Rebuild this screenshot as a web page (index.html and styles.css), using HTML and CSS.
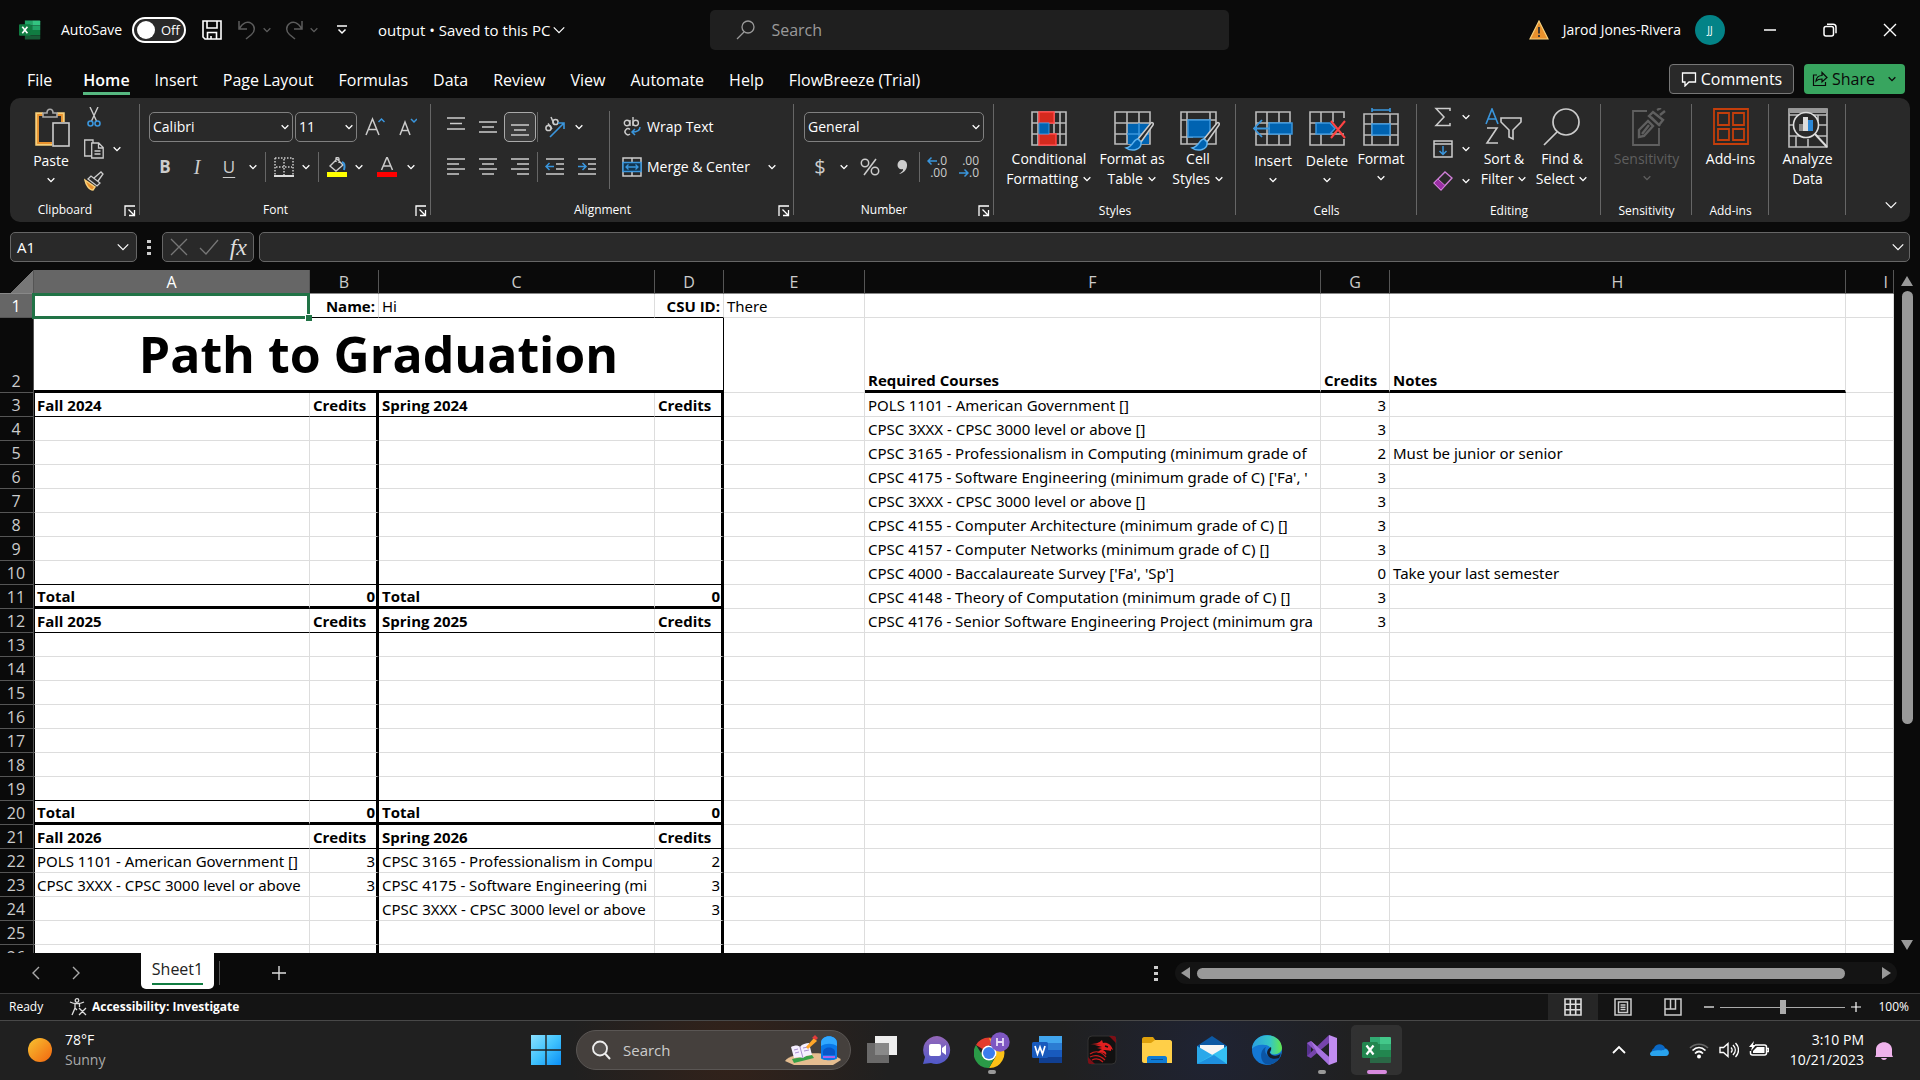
FILE: index.html
```html
<!DOCTYPE html>
<html lang="en">
<head>
<meta charset="utf-8">
<title>output - Excel</title>
<link rel="stylesheet" href="styles.css">
</head>
<body>
<svg class="sprite" aria-hidden="true">
  <symbol id="chev" viewBox="0 0 12 12"><path d="M2 4l4 4 4-4" fill="none" stroke="currentColor" stroke-width="1.6"/></symbol>
  <symbol id="chev-wide" viewBox="0 0 16 16"><path d="M2 5l6 6 6-6" fill="none" stroke="currentColor" stroke-width="1.4"/></symbol>
  <symbol id="launch" viewBox="0 0 12 12"><path d="M11 1H1v10M4.500 4.500L10 10M10.500 5v5.500H5" fill="none" stroke="currentColor" stroke-width="1.3"/></symbol>
  <symbol id="excel" viewBox="0 0 30 30"><path d="M8 2h10v7H8z" fill="#21a366"/><path d="M18 2h10a1 1 0 0 1 1 1v6H18z" fill="#33c481"/><path d="M8 9h10v6H8z" fill="#107c41"/><path d="M18 9h11v6H18z" fill="#21a366"/><path d="M8 15h21v7H8z" fill="#107c41"/><path d="M8 22h21v5a1 1 0 0 1-1 1H8z" fill="#185c37"/><rect y="7" width="16" height="16" rx="1.500" fill="#107c41"/><path d="M4.500 10.500l7 9M11.500 10.500l-7 9" stroke="#fff" stroke-width="2.200" fill="none"/></symbol>
</svg>

<header class="titlebar">
  <div class="quick">
  <svg class="i22 app"><use href="#excel"/></svg>
  <label class="autosave" for="autosave">AutoSave</label>
  <button class="toggle" id="autosave" type="button"><span class="knob"></span>Off</button>
  <button class="tb save" type="button" aria-label="Save"><svg class="i20" viewBox="0 0 20 20"><g fill="none" stroke="#fff" stroke-width="1.600"><path d="M1 1h18v18H3l-2-2z"/><path d="M5 1v7h10V1M5.500 19v-6.500h9V19M9 19v-3"/></g></svg></button>
  <button class="tb dim" type="button" aria-label="Undo"><svg class="i20" viewBox="0 0 20 20"><path d="M2 1v8h8M2.500 8.500C6 2 11 1 14.500 3.500c4 3 3.500 8 0 11L9 19" fill="none" stroke="currentColor" stroke-width="1.500"/></svg></button>
  <button class="cv dim" type="button" aria-label="Undo list"><svg class="i10"><use href="#chev"/></svg></button>
  <button class="tb dim redo" type="button" aria-label="Redo"><svg class="i20" viewBox="0 0 20 20"><path d="M18 1v8h-8M17.500 8.500C14 2 9 1 5.500 3.500c-4 3-3.500 8 0 11L11 19" fill="none" stroke="currentColor" stroke-width="1.500"/></svg></button>
  <button class="cv dim" type="button" aria-label="Redo list"><svg class="i10"><use href="#chev"/></svg></button>
  <button class="tb custom" type="button" aria-label="Customize toolbar"><svg class="i12" viewBox="0 0 12 12"><path d="M1 2h10M2.500 5.500L6 9l3.500-3.500" fill="none" stroke="#fff" stroke-width="1.500"/></svg></button>
  <button class="docname" type="button">output • Saved to this PC <svg class="i14"><use href="#chev-wide"/></svg></button>
  </div>
  <label class="search"><svg class="i20" viewBox="0 0 20 20"><g fill="none" stroke="#9a9a9a" stroke-width="1.300"><circle cx="12" cy="7" r="6"/><path d="M8 12l-7 7"/></g></svg><input type="text" placeholder="Search" aria-label="Search"></label>
  <div class="account">
    <svg class="i20" viewBox="0 0 20 20"><path d="M10 1l9 18H1z" fill="#e8912d" stroke="#f7cf7a" stroke-width="1.200"/><path d="M10 7v6.500M10 15v2" stroke="#333" stroke-width="1.800"/></svg>
    <span>Jarod Jones-Rivera</span><span class="avatar">JJ</span>
  </div>
  <div class="winbtns">
    <button type="button" aria-label="Minimize"><svg class="i14" viewBox="0 0 14 14"><path d="M1 7h12" stroke="#fff" stroke-width="1.500"/></svg></button>
    <button type="button" aria-label="Restore"><svg class="i14" viewBox="0 0 14 14"><g fill="none" stroke="#fff" stroke-width="1.500"><rect x="1" y="3.500" width="9.500" height="9.500" rx="2"/><path d="M4 1.200h6a3 3 0 0 1 3 3v6"/></g></svg></button>
    <button type="button" aria-label="Close"><svg class="i14" viewBox="0 0 14 14"><path d="M1 1l12 12M13 1L1 13" stroke="#fff" stroke-width="1.400"/></svg></button>
  </div>
</header>

<nav class="tabs">
  <a href="#file" class="file">File</a><a href="#home" class="on">Home</a><a href="#insert">Insert</a><a href="#layout">Page Layout</a><a href="#formulas">Formulas</a><a href="#data">Data</a><a href="#review">Review</a><a href="#view">View</a><a href="#automate">Automate</a><a href="#help">Help</a><a href="#flow">FlowBreeze (Trial)</a>
  <button class="comments" type="button"><svg class="i16" viewBox="0 0 16 16"><path d="M1.500 2h13v9H8l-4 4v-4H1.500z" fill="none" stroke="#fff" stroke-width="1.300"/></svg>Comments</button>
  <button class="share" type="button"><svg class="i16" viewBox="0 0 16 16"><path d="M5 4H1.500v10.500h12V11M4 10c.5-4 3-5.500 6-5.500V1.500l5 5-5 4.500V8C7.500 8 5.500 8.500 4 10z" fill="none" stroke="#0a0a0a" stroke-width="1.200"/></svg>Share<svg class="i10"><use href="#chev"/></svg></button>
</nav>

<section class="ribbon">
  <div class="group g-clip">
    <div class="body">
      <button class="big paste" type="button"><svg class="i40" viewBox="-2 0 40 40"><path d="M10 6H4v30h15M24 6h6v8" fill="none" stroke="#f7cf7a" stroke-width="3.500"/><path d="M10 7H5v28h14M24 7h5v7" fill="none" stroke="#e8912d" stroke-width="1.800"/><path d="M10 9V5h4c0-5 6-5 6 0h4v4z" fill="#292929" stroke="#aaa" stroke-width="1.600"/><rect x="20" y="15" width="16" height="23" fill="#292929" stroke="#ccc" stroke-width="1.600"/></svg><span>Paste</span><svg class="i10"><use href="#chev"/></svg></button>
      <div class="stack">
        <div><button class="ib" type="button" aria-label="Cut"><svg class="i20" viewBox="0 0 20 20"><path d="M6 0l6.500 14M14 0L7.500 14" stroke="#ccc" stroke-width="1.400"/><g fill="none" stroke="#3a96dd" stroke-width="1.600"><circle cx="6.500" cy="16.500" r="2.500"/><circle cx="13.500" cy="16.500" r="2.500"/></g></svg></button></div>
        <div><button class="ib" type="button" aria-label="Copy"><svg class="i20" viewBox="0 0 20 20"><g fill="#292929" stroke="#ccc" stroke-width="1.300"><path d="M8 17H0.700V1H9v3"/><path d="M7.700 4h7l4.500 4.500V19H7.700zM14.500 4v5h4.700M10.500 12h6M10.500 15h6"/></g></svg></button><button class="cv" type="button" aria-label="Copy options"><svg class="i10"><use href="#chev"/></svg></button></div>
        <div><button class="ib" type="button" aria-label="Format Painter"><svg class="i20" viewBox="0 0 20 20"><path d="M1 9l10 7-2 3c-4 0-7-5-8-10z" fill="#e8912d" stroke="#f7cf7a" stroke-width="1.500"/><path d="M4 8l3-3 9 7-3 3zM10 7l7-6 2 2-5 7" fill="#292929" stroke="#ccc" stroke-width="1.300"/></svg></button></div>
      </div>
    </div>
    <div class="cap">Clipboard<button type="button" class="launch" aria-label="Clipboard options"><svg class="i12"><use href="#launch"/></svg></button></div>
  </div>

  <div class="group g-font">
    <div class="body rows">
      <div class="row"><select class="drop w144" aria-label="Font"><option>Calibri</option></select><select class="drop w62" aria-label="Font size"><option>11</option></select><button class="ib" type="button" aria-label="Grow font"><svg class="i20" viewBox="0 0 20 20"><path d="M1 18L7.500 2 14 18M3.500 12.500h8" fill="none" stroke="#ccc" stroke-width="1.500"/><path d="M13.500 5l3-3 3 3" fill="none" stroke="#3a96dd" stroke-width="1.500"/></svg></button><button class="ib" type="button" aria-label="Shrink font"><svg class="i20" viewBox="0 0 20 20"><path d="M3 18L8 5l5 13M5 13.500h6.500" fill="none" stroke="#ccc" stroke-width="1.500"/><path d="M14 2l3 3 3-3" fill="none" stroke="#3a96dd" stroke-width="1.500"/></svg></button></div>
      <div class="row"><button class="ib glyph bold" type="button">B</button><button class="ib glyph ital" type="button">I</button><button class="ib glyph under" type="button">U</button><button class="cv" type="button" aria-label="Underline options"><svg class="i10"><use href="#chev"/></svg></button><i class="sep"></i><button class="ib n" type="button" aria-label="Borders"><svg class="i20" viewBox="0 0 20 20"><path d="M1 1h18v17M1 1v17M10 2v16M2 10h16" fill="none" stroke="#ccc" stroke-width="1.500" stroke-dasharray="1.500 1.500"/><path d="M0 19h20" stroke="#ddd" stroke-width="2"/></svg></button><button class="cv" type="button" aria-label="Border options"><svg class="i10"><use href="#chev"/></svg></button><i class="sep"></i><button class="ib n" type="button" aria-label="Fill color"><svg class="i20" viewBox="0 0 20 20"><path d="M3 9l7-7 6 6-7 6zM9 5V1.500c0-2 3-1 3 .5v4" fill="none" stroke="#ccc" stroke-width="1.400"/><path d="M15 5c3 1 3 4 2 8" fill="none" stroke="#3a96dd" stroke-width="2"/><path d="M0 15h20v5H0z" fill="#ff0"/></svg></button><button class="cv" type="button" aria-label="Fill options"><svg class="i10"><use href="#chev"/></svg></button><button class="ib fc" type="button" aria-label="Font color"><svg class="i20" viewBox="0 0 20 20"><path d="M4.500 13L10 0l5.500 13M6.500 9h7" fill="none" stroke="#ccc" stroke-width="1.500"/><path d="M0 15h20v5H0z" fill="#f00"/></svg></button><button class="cv" type="button" aria-label="Font color options"><svg class="i10"><use href="#chev"/></svg></button></div>
    </div>
    <div class="cap">Font<button type="button" class="launch" aria-label="Font options"><svg class="i12"><use href="#launch"/></svg></button></div>
  </div>

  <div class="group g-align">
    <div class="body">
      <div class="rows">
        <div class="row"><button class="ib" type="button" aria-label="Top align"><svg class="i20" viewBox="0 0 20 20"><path d="M1 1h18M4 6.500h12M1 12h18" stroke="#ccc" stroke-width="1.500"/></svg></button><button class="ib" type="button" aria-label="Middle align"><svg class="i20" viewBox="0 0 20 20"><path d="M1 5h18M4 10h12M1 15h18" stroke="#ccc" stroke-width="1.500"/></svg></button><button class="ib pressed" type="button" aria-label="Bottom align"><svg class="i20" viewBox="0 0 20 20"><path d="M1 8h18M4 13h12M1 18h18" stroke="#ccc" stroke-width="1.500"/></svg></button><i class="sep tight"></i><button class="ib" type="button" aria-label="Orientation"><svg class="i22" viewBox="0 0 22 22"><g fill="none" stroke="#ccc" stroke-width="1.500"><circle cx="4.500" cy="12" r="2.600"/><path d="M4 7.500l4 5.500"/><circle cx="11.500" cy="6" r="2.600"/><path d="M7 1l3 7"/></g><path d="M6 21L20 7M14 7h6v6" fill="none" stroke="#3a96dd" stroke-width="1.600"/></svg></button><button class="cv" type="button" aria-label="Orientation options"><svg class="i10"><use href="#chev"/></svg></button></div>
        <div class="row"><button class="ib" type="button" aria-label="Align left"><svg class="i20" viewBox="0 0 20 20"><path d="M1 2h18M1 7h12M1 12h18M1 17h12" stroke="#ccc" stroke-width="1.500"/></svg></button><button class="ib" type="button" aria-label="Center"><svg class="i20" viewBox="0 0 20 20"><path d="M1 2h18M4 7h12M1 12h18M4 17h12" stroke="#ccc" stroke-width="1.500"/></svg></button><button class="ib" type="button" aria-label="Align right"><svg class="i20" viewBox="0 0 20 20"><path d="M1 2h18M7 7h12M1 12h18M7 17h12" stroke="#ccc" stroke-width="1.500"/></svg></button><i class="sep tight"></i><button class="ib" type="button" aria-label="Decrease indent"><svg class="i20" viewBox="0 0 20 20"><path d="M1 2h18M11 7h8M11 12h8M1 17h18" stroke="#ccc" stroke-width="1.500"/><path d="M9 9.500H1M4.500 6L1 9.500 4.500 13" fill="none" stroke="#3a96dd" stroke-width="1.500"/></svg></button><button class="ib" type="button" aria-label="Increase indent"><svg class="i20" viewBox="0 0 20 20"><path d="M1 2h18M11 7h8M11 12h8M1 17h18" stroke="#ccc" stroke-width="1.500"/><path d="M1 9.500h8M5.500 6L9 9.500 5.500 13" fill="none" stroke="#3a96dd" stroke-width="1.500"/></svg></button></div>
      </div>
      <i class="tall"></i>
      <div class="rows">
        <div class="row"><button class="txt" type="button"><svg class="i20" viewBox="0 0 20 20"><g fill="none" stroke="#ccc" stroke-width="1.400"><circle cx="5" cy="6" r="2.700"/><path d="M8 3v6M11 0v9"/><circle cx="13.700" cy="6" r="2.700"/><path d="M8 12.500a3 3 0 1 0 0 4.500"/></g><path d="M18 10c0 4-3 5-8 5M13 12l-3 3 3 3" fill="none" stroke="#3a96dd" stroke-width="1.500"/></svg>Wrap Text</button></div>
        <div class="row"><button class="txt" type="button"><svg class="i20" viewBox="0 0 20 20"><path d="M1 1h18v18H1zM10 1v4M10 15v4" fill="none" stroke="#ccc" stroke-width="1.500"/><path d="M1 5.500h18v9H1z" fill="#12354f" stroke="#3a96dd" stroke-width="1.500"/><path d="M4 10h12M6.500 7.500L4 10l2.500 2.500M13.500 7.500L16 10l-2.500 2.500" fill="none" stroke="#3a96dd" stroke-width="1.300"/></svg>Merge &amp; Center</button><button class="cv far" type="button" aria-label="Merge options"><svg class="i10"><use href="#chev"/></svg></button></div>
      </div>
    </div>
    <div class="cap">Alignment<button type="button" class="launch" aria-label="Alignment options"><svg class="i12"><use href="#launch"/></svg></button></div>
  </div>

  <div class="group g-num">
    <div class="body rows">
      <div class="row"><select class="drop w180" aria-label="Number format"><option>General</option></select></div>
      <div class="row"><button class="ib glyph num" type="button">$</button><button class="cv" type="button" aria-label="Currency options"><svg class="i10"><use href="#chev"/></svg></button><button class="ib pct" type="button" aria-label="Percent"><svg class="i20" viewBox="0 0 20 20"><g fill="none" stroke="#ccc" stroke-width="1.500"><circle cx="5" cy="6" r="3.700"/><circle cx="15" cy="14" r="3.700"/><path d="M16 2L4 18"/></g></svg></button><button class="ib" type="button" aria-label="Comma"><svg class="i20" viewBox="0 0 20 20"><path d="M10 3c6 0 6 7 3.500 10-1.500 2-3.500 3.500-6.500 4 3-2 4.500-3.500 4-5-3 1-5.500-1-5.500-4 0-3 2-5 4.500-5z" fill="#ccc"/></svg></button><i class="sep tight"></i><button class="ib dec" type="button"><span><svg class="i10" viewBox="0 0 10 10"><path d="M10 5H1M4.500 1.500L1 5l3.500 3.500" fill="none" stroke="#3a96dd" stroke-width="1.500"/></svg>.0</span><span>.00</span></button><button class="ib dec" type="button"><span>.00</span><span><svg class="i10" viewBox="0 0 10 10"><path d="M0 5h9M5.500 1.500L9 5 5.500 8.500" fill="none" stroke="#3a96dd" stroke-width="1.500"/></svg>.0</span></button></div>
    </div>
    <div class="cap">Number<button type="button" class="launch" aria-label="Number options"><svg class="i12"><use href="#launch"/></svg></button></div>
  </div>

  <div class="group g-styles">
    <div class="body">
      <button class="big b90" type="button"><svg class="i36" viewBox="0 0 36 36"><path d="M1 1h34v33H1zM7 1v33M29 1v33M1 12h34M1 23h34M23 1v33" fill="none" stroke="#bbb" stroke-width="1.600"/><path d="M8 1h15v11H8zM8 23h17v11H8z" fill="#d42a1e" stroke="#ff4343" stroke-width="1.500"/><path d="M8 12h10v11H8z" fill="#0063b1" stroke="#3a96dd"/></svg><span>Conditional<br>Formatting <svg class="i10"><use href="#chev"/></svg></span></button>
      <button class="big b76" type="button"><svg class="i40 brush" viewBox="0 0 40 40"><path d="M1 1h35v32H1z" fill="none" stroke="#bbb" stroke-width="1.600"/><path d="M13 12h22v21H13z" fill="#0063b1"/><path d="M1 12h35M1 23h12M13 1v32M25 1v11" fill="none" stroke="#bbb" stroke-width="1.600"/><path d="M13 23h22M25 12v21" stroke="#3a96dd" stroke-width="1.500"/><path d="M37 12L24 28l3 3 12-17c1-2-1-3-2-2z" fill="#292929" stroke="#ccc" stroke-width="1.500"/><path d="M24 28c-5 0-4 7-12 9 6 4 16 2 15-6z" fill="#0063b1" stroke="#5db3f0" stroke-width="1.500"/></svg><span>Format as<br>Table <svg class="i10"><use href="#chev"/></svg></span></button>
      <button class="big b56" type="button"><svg class="i40 brush" viewBox="0 0 40 40"><path d="M1 1h35v32H1zM7 1v32M30 1v8M1 9h35M1 26h12" fill="none" stroke="#bbb" stroke-width="1.600"/><path d="M8 9h22v17H8z" fill="#0063b1" stroke="#3a96dd" stroke-width="1.500"/><path d="M37 12L24 28l3 3 12-17c1-2-1-3-2-2z" fill="#292929" stroke="#ccc" stroke-width="1.500"/><path d="M24 28c-5 0-4 7-12 9 6 4 16 2 15-6z" fill="#0063b1" stroke="#5db3f0" stroke-width="1.500"/></svg><span>Cell<br>Styles <svg class="i10"><use href="#chev"/></svg></span></button>
    </div>
    <div class="cap">Styles</div>
  </div>

  <div class="group g-cells">
    <div class="body">
      <button class="big b54" type="button"><svg class="i40" viewBox="0 0 40 40"><path d="M3 4h34v33H3zM14 4v33M26 4v33M3 15h34M3 26h34" fill="none" stroke="#bbb" stroke-width="1.600"/><path d="M16 15h23v11H16z" fill="#0063b1" stroke="#3a96dd" stroke-width="1.500"/><path d="M17 20.500H1M9 12l-8 8.500L9 29" fill="none" stroke="#3a96dd" stroke-width="1.800"/></svg><span>Insert</span><svg class="i10"><use href="#chev"/></svg></button>
      <button class="big b54" type="button"><svg class="i40" viewBox="0 0 40 40"><path d="M37 10V4H3v33h34v-6M14 4v33M26 4v10M3 15h12M3 26h34" fill="none" stroke="#bbb" stroke-width="1.600"/><path d="M9 15h14l5 5.500-5 5.500H9z" fill="#0063b1" stroke="#3a96dd" stroke-width="1.500"/><path d="M24 13l14 17M38 13L24 30" stroke="#ff4343" stroke-width="2"/></svg><span>Delete</span><svg class="i10"><use href="#chev"/></svg></button>
      <button class="big up b54" type="button"><svg class="i40" viewBox="0 0 40 40"><path d="M3 6h34v31H3zM11 6v31M29 6v31M3 16h34M3 27h34" fill="none" stroke="#bbb" stroke-width="1.600"/><path d="M11 16h18v11H11z" fill="#0063b1" stroke="#3a96dd" stroke-width="1.500"/><path d="M11 2h18M11 0v4M29 0v4" stroke="#3a96dd" stroke-width="1.600"/></svg><span>Format</span><svg class="i10"><use href="#chev"/></svg></button>
    </div>
    <div class="cap">Cells</div>
  </div>

  <div class="group g-edit">
    <div class="body">
      <div class="stack">
        <div><button class="ib" type="button" aria-label="AutoSum"><svg class="i20" viewBox="0 0 20 20"><path d="M17 4V1.500H3L11 10l-8 8.500h14V16" fill="none" stroke="#ccc" stroke-width="1.500"/></svg></button><button class="cv" type="button" aria-label="AutoSum options"><svg class="i10"><use href="#chev"/></svg></button></div>
        <div><button class="ib" type="button" aria-label="Fill"><svg class="i20" viewBox="0 0 20 20"><path d="M1 2h18v16H1zM1 5h18" fill="none" stroke="#ccc" stroke-width="1.500"/><path d="M10 7v8.500M6.500 12l3.500 3.500 3.500-3.500" fill="none" stroke="#3a96dd" stroke-width="1.500"/></svg></button><button class="cv" type="button" aria-label="Fill options"><svg class="i10"><use href="#chev"/></svg></button></div>
        <div><button class="ib" type="button" aria-label="Clear"><svg class="i20" viewBox="0 0 20 20"><path d="M1 12L12 1l7 6L8 19z" fill="none" stroke="#d07fd8" stroke-width="1.400"/><path d="M1 12l4-4 7 6.500L8 19z" fill="#9b2fa5" stroke="#d07fd8"/></svg></button><button class="cv" type="button" aria-label="Clear options"><svg class="i10"><use href="#chev"/></svg></button></div>
      </div>
      <button class="big up b58" type="button"><svg class="i40" viewBox="0 0 40 40"><path d="M2 16L8 1l6 15M4 11h8" fill="none" stroke="#3a96dd" stroke-width="1.600"/><path d="M3 20h10L3 35h11M17 10h20v4l-8 8v9l-4-2v-7l-8-8z" fill="none" stroke="#ccc" stroke-width="1.600"/></svg><span>Sort &amp;<br>Filter <svg class="i10"><use href="#chev"/></svg></span></button>
      <button class="big up b58" type="button"><svg class="i40" viewBox="0 0 40 40"><g fill="none" stroke="#ccc" stroke-width="1.700"><circle cx="24" cy="14" r="13"/><path d="M15 24L2 37"/></g></svg><span>Find &amp;<br>Select <svg class="i10"><use href="#chev"/></svg></span></button>
    </div>
    <div class="cap">Editing</div>
  </div>

  <div class="group g-sens">
    <div class="body"><button class="big up fill off" type="button" disabled><svg class="i40" viewBox="0 0 40 40"><path d="M20 3H6v34h26V20" fill="none" stroke="currentColor" stroke-width="1.800"/><path d="M12 22l9-9 5 5-9 10-5 1zM15 26l7-9M24 9l9 9M22 8l4-4 10 8-4 5zM30 2l4-2M33 7l5-4" fill="none" stroke="currentColor" stroke-width="2.400"/></svg><span>Sensitivity</span><svg class="i10"><use href="#chev"/></svg></button></div>
    <div class="cap">Sensitivity</div>
  </div>
  <div class="group g-add">
    <div class="body"><button class="big up fill" type="button"><svg class="i40" viewBox="0 0 40 40"><path d="M3 1h34v35H3zM7 5h11v12H7zM22 5h11v12H22zM7 21h11v11H7zM22 21h11v11H22z" fill="none" stroke="#c43e0b" stroke-width="1.800"/></svg><span>Add-ins</span></button></div>
    <div class="cap">Add-ins</div>
  </div>
  <div class="group g-add">
    <div class="body"><button class="big up fill" type="button"><svg class="i40" viewBox="0 0 40 40"><path d="M1 1h38v38H1zM1 7h38M1 17h10M30 17h9M1 28h12M29 28h10M8 28v11M20 31v8M30 7v6" fill="none" stroke="#bbb" stroke-width="1.600"/><path d="M1 1h38v4H1z" fill="#999"/><circle cx="18" cy="17" r="12.500" fill="#292929" stroke="#ddd" stroke-width="1.600"/><path d="M11 16h4v7h-4z" fill="#888"/><path d="M15 9h5v14h-5z" fill="#ddd"/><path d="M20 12h5v11h-5z" fill="#2b88d8"/><path d="M27 26l12 13" stroke="#ddd" stroke-width="2"/></svg><span>Analyze<br>Data</span></button></div>
  </div>
  <button class="collapse" type="button" aria-label="Collapse ribbon"><svg class="i14"><use href="#chev-wide"/></svg></button>
</section>

<section class="formula">
  <button class="namebox" type="button">A1<svg class="i14"><use href="#chev-wide"/></svg></button>
  <svg class="dots" viewBox="0 0 4 16"><path d="M0 1h4v3H0zM0 7h4v3H0zM0 13h4v3H0z" fill="#ccc"/></svg>
  <div class="fx"><svg class="i18" viewBox="0 0 18 18"><path d="M1 1l16 16M17 1L1 17" stroke="#777" stroke-width="1.300"/></svg><svg class="i20" viewBox="0 0 20 20"><path d="M1 11l6 6L19 3" fill="none" stroke="#777" stroke-width="1.300"/></svg><span>fx</span></div>
  <label class="fline"><input type="text" aria-label="Formula"><svg class="i14"><use href="#chev-wide"/></svg></label>
</section>

<main class="sheet">
  <div class="viewport">
  <table class="grid">
    <colgroup><col class="c-n"><col class="c-w"><col class="c-s"><col class="c-w"><col class="c-s"><col class="c-e"><col class="c-x"><col class="c-s"><col class="c-x"><col></colgroup>
    <thead><tr><th class="corner"></th><th class="sel">A</th><th>B</th><th>C</th><th>D</th><th>E</th><th>F</th><th>G</th><th>H</th><th class="last-h">I</th></tr></thead>
    <tbody>
    <tr class="r1"><th class="sel">1</th><td class="active"></td><td class="b r">Name:</td><td>Hi</td><td class="b r">CSU ID:</td><td>There</td><td></td><td></td><td></td><td></td></tr>
    <tr class="r2"><th>2</th><td colspan="4" class="title">Path to Graduation</td><td></td><td class="b u">Required Courses</td><td class="b u">Credits</td><td class="b u">Notes</td><td></td></tr>
    <tr class="plan head"><th>3</th><td>Fall 2024</td><td>Credits</td><td>Spring 2024</td><td>Credits</td><td></td><td>POLS 1101 - American Government []</td><td class="r">3</td><td></td><td></td></tr>
    <tr class="plan"><th>4</th><td></td><td></td><td></td><td></td><td></td><td>CPSC 3XXX - CPSC 3000 level or above []</td><td class="r">3</td><td></td><td></td></tr>
    <tr class="plan"><th>5</th><td></td><td></td><td></td><td></td><td></td><td>CPSC 3165 - Professionalism in Computing (minimum grade of</td><td class="r">2</td><td>Must be junior or senior</td><td></td></tr>
    <tr class="plan"><th>6</th><td></td><td></td><td></td><td></td><td></td><td>CPSC 4175 - Software Engineering (minimum grade of C) ['Fa', '</td><td class="r">3</td><td></td><td></td></tr>
    <tr class="plan"><th>7</th><td></td><td></td><td></td><td></td><td></td><td>CPSC 3XXX - CPSC 3000 level or above []</td><td class="r">3</td><td></td><td></td></tr>
    <tr class="plan"><th>8</th><td></td><td></td><td></td><td></td><td></td><td>CPSC 4155 - Computer Architecture (minimum grade of C) []</td><td class="r">3</td><td></td><td></td></tr>
    <tr class="plan"><th>9</th><td></td><td></td><td></td><td></td><td></td><td>CPSC 4157 - Computer Networks (minimum grade of C) []</td><td class="r">3</td><td></td><td></td></tr>
    <tr class="plan end"><th>10</th><td></td><td></td><td></td><td></td><td></td><td>CPSC 4000 - Baccalaureate Survey ['Fa', 'Sp']</td><td class="r">0</td><td>Take your last semester</td><td></td></tr>
    <tr class="plan total"><th>11</th><td>Total</td><td class="r">0</td><td>Total</td><td class="r">0</td><td></td><td>CPSC 4148 - Theory of Computation (minimum grade of C) []</td><td class="r">3</td><td></td><td></td></tr>
    <tr class="plan head"><th>12</th><td>Fall 2025</td><td>Credits</td><td>Spring 2025</td><td>Credits</td><td></td><td>CPSC 4176 - Senior Software Engineering Project (minimum gra</td><td class="r">3</td><td></td><td></td></tr>
    <tr class="plan"><th>13</th><td></td><td></td><td></td><td></td><td></td><td></td><td></td><td></td><td></td></tr>
    <tr class="plan"><th>14</th><td></td><td></td><td></td><td></td><td></td><td></td><td></td><td></td><td></td></tr>
    <tr class="plan"><th>15</th><td></td><td></td><td></td><td></td><td></td><td></td><td></td><td></td><td></td></tr>
    <tr class="plan"><th>16</th><td></td><td></td><td></td><td></td><td></td><td></td><td></td><td></td><td></td></tr>
    <tr class="plan"><th>17</th><td></td><td></td><td></td><td></td><td></td><td></td><td></td><td></td><td></td></tr>
    <tr class="plan"><th>18</th><td></td><td></td><td></td><td></td><td></td><td></td><td></td><td></td><td></td></tr>
    <tr class="plan end"><th>19</th><td></td><td></td><td></td><td></td><td></td><td></td><td></td><td></td><td></td></tr>
    <tr class="plan total"><th>20</th><td>Total</td><td class="r">0</td><td>Total</td><td class="r">0</td><td></td><td></td><td></td><td></td><td></td></tr>
    <tr class="plan head"><th>21</th><td>Fall 2026</td><td>Credits</td><td>Spring 2026</td><td>Credits</td><td></td><td></td><td></td><td></td><td></td></tr>
    <tr class="plan"><th>22</th><td>POLS 1101 - American Government []</td><td class="r">3</td><td>CPSC 3165 - Professionalism in Compu</td><td class="r">2</td><td></td><td></td><td></td><td></td><td></td></tr>
    <tr class="plan"><th>23</th><td>CPSC 3XXX - CPSC 3000 level or above</td><td class="r">3</td><td>CPSC 4175 - Software Engineering (mi</td><td class="r">3</td><td></td><td></td><td></td><td></td><td></td></tr>
    <tr class="plan"><th>24</th><td></td><td></td><td>CPSC 3XXX - CPSC 3000 level or above</td><td class="r">3</td><td></td><td></td><td></td><td></td><td></td></tr>
    <tr class="plan"><th>25</th><td></td><td></td><td></td><td></td><td></td><td></td><td></td><td></td><td></td></tr>
    <tr class="plan"><th>26</th><td></td><td></td><td></td><td></td><td></td><td></td><td></td><td></td><td></td></tr>
    </tbody>
  </table>
  </div>
  <div class="vscroll"><svg class="i12" viewBox="0 0 12 12"><path d="M6 1l6 10H0z" fill="#999"/></svg><span class="vthumb"></span><svg class="i12" viewBox="0 0 12 12"><path d="M6 11l6-10H0z" fill="#999"/></svg></div>
</main>

<section class="sheetbar">
  <button class="nav" type="button" aria-label="Previous sheet"><svg class="i14" viewBox="0 0 14 14"><path d="M10 1L4 7l6 6" fill="none" stroke="#aaa" stroke-width="1.400"/></svg></button>
  <button class="nav" type="button" aria-label="Next sheet"><svg class="i14" viewBox="0 0 14 14"><path d="M4 1l6 6-6 6" fill="none" stroke="#aaa" stroke-width="1.400"/></svg></button>
  <button class="sheettab" type="button"><span>Sheet1</span></button>
  <button class="add" type="button" aria-label="New sheet"><svg class="i14" viewBox="0 0 14 14"><path d="M7 0v14M0 7h14" stroke="#ddd" stroke-width="1.400"/></svg></button>
  <svg class="dots" viewBox="0 0 4 16"><path d="M0 1h4v3H0zM0 7h4v3H0zM0 13h4v3H0z" fill="#ccc"/></svg>
  <div class="hscroll"><svg class="i12" viewBox="0 0 12 12"><path d="M1 6l9-6v12z" fill="#999"/></svg><span class="hthumb"></span><svg class="i12" viewBox="0 0 12 12"><path d="M11 6L2 0v12z" fill="#999"/></svg></div>
</section>

<section class="status">
  <span class="ready">Ready</span>
  <svg class="i18" viewBox="0 0 18 18"><g fill="none" stroke="#ddd" stroke-width="1.300"><circle cx="8" cy="2.500" r="1.800"/><path d="M1 4c4 2 10 2 14 0M6 6v4l-3 7M10.500 6v3M6 10l2 2M10 10l7 7M17 10l-7 7"/></g></svg>
  <span class="acc">Accessibility: Investigate</span>
  <div class="views">
    <button class="on" type="button" aria-label="Normal"><svg class="i18" viewBox="0 0 18 18"><path d="M1 1h16v16H1zM6.300 1v16M11.700 1v16M1 6.300h16M1 11.700h16" fill="none" stroke="#ddd" stroke-width="1.600"/></svg></button>
    <button type="button" aria-label="Page layout"><svg class="i18" viewBox="0 0 18 18"><path d="M1 1h16v16H1zM4.500 4h9v10.500h-9zM6.500 7h5M6.500 9.300h5M6.500 11.600h5" fill="none" stroke="#ccc" stroke-width="1.500"/></svg></button>
    <button type="button" aria-label="Page break"><svg class="i18" viewBox="0 0 18 18"><path d="M1 1h16v16H1zM6.500 1v10M11.500 1v10H1" fill="none" stroke="#ccc" stroke-width="1.500"/></svg></button>
  </div>
  <button class="z" type="button" aria-label="Zoom out"><svg class="i10" viewBox="0 0 10 10"><path d="M0 5h10" stroke="#fff" stroke-width="1.200"/></svg></button>
  <input class="zoom" type="range" min="0" max="200" value="100" aria-label="Zoom">
  <button class="z" type="button" aria-label="Zoom in"><svg class="i10" viewBox="0 0 10 10"><path d="M0 5h10M5 0v10" stroke="#fff" stroke-width="1.200"/></svg></button>
  <span class="pct100">100%</span>
</section>

<footer class="taskbar">
  <div class="weather"><span class="sun"></span><div><div>78°F</div><div class="mute">Sunny</div></div></div>
  <div class="apps">
    <button type="button" aria-label="Start"><svg class="i30" viewBox="0 0 30 30"><defs><linearGradient id="win" x1="0" y1="0" x2="1" y2="1"><stop offset="0" stop-color="#8be0ff"/><stop offset=".5" stop-color="#41c3fd"/><stop offset="1" stop-color="#0a8ef5"/></linearGradient></defs><path d="M0 0h14.300v14.300H0zM15.700 0H30v14.300H15.700zM0 15.700h14.300V30H0zM15.700 15.700H30V30H15.700z" fill="url(#win)"/></svg></button>
    <label class="tsearch"><svg class="i20" viewBox="0 0 20 20"><circle cx="9" cy="8.500" r="7" fill="#565250" stroke="#eee" stroke-width="1.800"/><path d="M14 13.500l5 5.500" stroke="#eee" stroke-width="2"/></svg><input type="text" placeholder="Search" aria-label="Search Windows"><svg class="art" viewBox="0 0 58 32"><path d="M1 27C8 17 50 17 57 26l-8 5H10z" fill="#e5bd90"/><path d="M8 25l20-4 2 3-20 5z" fill="#38a048"/><path d="M7 13c4-2 7-2 9 0 2-3 6-4 9-4l3 12c-4 0-7 1-9 3-2-1-6-1-9 0z" fill="#f5efff"/><path d="M16 13l3 11M10 16l4-1M11 19l4-1M19 14l5-1M20 17l5-1" stroke="#a88fd0" fill="none"/><path d="M22 13l8-9 3 3-9 8z" fill="#ffa629"/><path d="M28 4l3-3 3 3-2 2z" fill="#e33b3b"/><path d="M37 24V9c0-9 16-9 16 0v15c0 3-16 3-16 0z" fill="#0a78e8"/><path d="M37 12c5-3 11-3 16 0v-3c0-9-16-9-16 0z" fill="#31a8ff"/><path d="M39 18c0-6 12-6 12 0v3H39z" fill="#0756c9"/><path d="M39 22h12v2H39z" fill="#ab62e8"/></svg></label>
    <button type="button" aria-label="Task view"><svg class="i30" viewBox="0 0 30 30"><path d="M8 1h22v19H8z" fill="#eee"/><path d="M0 8h22v20H0z" fill="#777" opacity=".85"/></svg></button>
    <button type="button" aria-label="Chat"><svg class="i30" viewBox="0 0 30 30"><defs><linearGradient id="chat" x1="0" y1="0" x2="0" y2="1"><stop offset="0" stop-color="#9467b8"/><stop offset="1" stop-color="#5059c9"/></linearGradient></defs><path d="M15 1a14 14 0 1 1-6 27l-8 1 2-7A14 14 0 0 1 15 1z" fill="url(#chat)"/><rect x="7" y="9" width="12" height="12" rx="2" fill="#fff"/><path d="M20 13l4-3v10l-4-3z" fill="#fff"/></svg></button>
    <button type="button" aria-label="Chrome" class="run"><svg class="i36" viewBox="0 0 36 36"><path d="M15 21L2 13A15 15 0 0 1 28 13H15z" fill="#e33b2e"/><path d="M15 6a15 15 0 0 1 0 0L28 13a15 15 0 0 1-13 23l7-12z" fill="#fbc116"/><path d="M2 13a15 15 0 0 0 13 23l6-11-12-1z" fill="#2a9a47"/><circle cx="15" cy="21" r="7.500" fill="#fff"/><circle cx="15" cy="21" r="6" fill="#3b7ded"/><circle cx="26" cy="10" r="9.700" fill="#7e57c2"/><path d="M23 6v8M29 6v8M23 10h6" stroke="#e7dcf7" stroke-width="1.800"/></svg></button>
    <button type="button" aria-label="Word"><svg class="i30" viewBox="0 0 30 30"><path d="M7 1h23v7H7z" fill="#41a5ee"/><path d="M7 8h23v7H7z" fill="#2b7cd3"/><path d="M7 15h23v7H7z" fill="#185abd"/><path d="M7 22h23v6H7z" fill="#103f91"/><rect y="7" width="16" height="16" rx="1.500" fill="#185abd"/><path d="M3 11l2.500 8L8 12l2.500 7L13 11" fill="none" stroke="#fff" stroke-width="1.700"/></svg></button>
    <button type="button" aria-label="Dragon Center"><svg class="i30" viewBox="0 0 30 30"><rect x="1" y="1" width="28" height="28" rx="4" fill="#111" stroke="#333"/><path d="M22 1h5a2 2 0 0 1 2 2v5zM1 22v5a2 2 0 0 0 2 2h5z" fill="#7d0f16"/><path d="M3 9c6 0 9-1 12-4l1 3c4-1 8 1 10 7l-2-1v2c-3-1-5-1-8-1 3 2 4 3 3 5-2-3-6-3-9-2 2-2 3-3 5-4l-5-1 5-1-7-2 6 0z" fill="#e02020"/><path d="M3 19c6-4 12-2 16 3M3 22c6-3 11-1 15 3M5 25c4-2 8-1 11 2" stroke="#c81c1c" stroke-width="1.300" fill="none"/><path d="M18 11l3 1" stroke="#111" stroke-width="1.500"/></svg></button>
    <button type="button" aria-label="File Explorer"><svg class="i30" viewBox="0 0 30 30"><path d="M0 4c0-1 1-2 2-2h9l3 4v6H0z" fill="#dea00b"/><path d="M0 8h9l4-3h15c1 0 2 1 2 2v21H2c-1 0-2-1-2-2z" fill="#ffcf48"/><path d="M5 28v-5c0-1 1-2 2-2h16c1 0 2 1 2 2v5z" fill="#0f7bd4"/><path d="M9 24.500h12" stroke="#0b4f91"/></svg></button>
    <button type="button" aria-label="Mail"><svg class="i30" viewBox="0 0 30 30"><path d="M0 11L15 1l15 10v5H0z" fill="#0c59a4"/><path d="M3 10h24v4l-12 7L3 14z" fill="#f5f5f5"/><path d="M0 11l17 10L0 29z" fill="#2aa8ea"/><path d="M30 11v18H0z" fill="#35c0f2"/><path d="M17 20l13 9H0z" fill="#1e90df"/></svg></button>
    <button type="button" aria-label="Edge"><svg class="i30" viewBox="0 0 30 30"><defs><linearGradient id="edge" x1="0" y1="0" x2="1" y2="0"><stop offset="0" stop-color="#2a9fe0"/><stop offset=".6" stop-color="#35c6c6"/><stop offset="1" stop-color="#63e84d"/></linearGradient></defs><circle cx="15" cy="15" r="15" fill="#1478d4"/><path d="M0 13C2-4 29-4 30 13c0 6-9 8-12 5 3-3 0-8-5-8C7 9 2 11 0 14z" fill="url(#edge)"/><path d="M18 18c2 4 7 4 11 2-3 8-12 12-17 8-5-5-3-14 2-16-2 3-1 8 4 10z" fill="#0b55a5"/><path d="M19 12c1 4-2 4-1 6 1 3 8 4 11 0l-2 5c-6 2-11 0-12-5 0-3 2-5 4-6z" fill="#171d2a"/></svg></button>
    <button type="button" aria-label="Visual Studio" class="run"><svg class="i30" viewBox="0 0 30 30"><path d="M0 8l4-2v17l-4-2z" fill="#55318c"/><path d="M0 8l4-2 18 16v8L3 11z" fill="#8b57c4"/><path d="M22 0v8L4 23l-4-2z" fill="#7644ac"/><path d="M4 6l18 16v8L10 18z" fill="#a672df"/><path d="M22 0l8 3v24l-8 3z" fill="#c08cf0"/></svg></button>
    <button type="button" aria-label="Excel" class="run cur"><svg class="i30"><use href="#excel"/></svg></button>
  </div>
  <div class="tray">
    <svg class="i14" viewBox="0 0 14 14"><path d="M1 10l6-6 6 6" fill="none" stroke="#fff" stroke-width="1.800"/></svg>
    <svg class="i20 cloud" viewBox="0 0 20 20"><path d="M5 16a4.500 4.500 0 0 1 0-8c2-5 9-5 11 0 5 1 5 8 0 8z" fill="#0a68c4"/><path d="M4 16c-4 0-4-4 0-5 6-2 9 1 12-2 5 1 5 7 0 7z" fill="#2aa3ec"/></svg>
    <svg class="i20" viewBox="0 0 20 20"><g fill="none" stroke-width="1.700"><path d="M1 8c5-5 13-5 18 0" stroke="#666"/><path d="M3.500 10.500c4-4 9-4 13 0M6 13.500c2.500-2.500 5.500-2.500 8 0" stroke="#fff"/></g><circle cx="10" cy="16.500" r="2" fill="#fff"/></svg>
    <svg class="i20" viewBox="0 0 20 20"><path d="M1 7.500h3.500L9 3.500v13l-4.500-4H1zM12 7.500c1.500 1.500 1.500 3.500 0 5M14 5c3 3 3 7 0 10M16.500 3c4 4 4 10 0 14" fill="none" stroke="#fff" stroke-width="1.400"/></svg>
    <svg class="i20" viewBox="0 0 20 20"><path d="M6 5h9.500a2 2 0 0 1 2 2v6a2 2 0 0 1-2 2H3.500a2 2 0 0 1-2-2v-2M18 8.500h1.500v3H18" fill="none" stroke="#fff" stroke-width="1.500"/><path d="M8 7h7.500v6H4v-2z" fill="#fff"/><path d="M5 1L0 7h3l-1 4 5-6H4z" fill="#fff"/></svg>
    <div class="clock"><div>3:10 PM</div><div>10/21/2023</div></div>
    <svg class="i20" viewBox="0 0 20 20"><path d="M2 15V9c1-9 15-9 16 0v6l1 2H1zM7 18h6c-1 2.500-5 2.500-6 0z" fill="#efb3ec"/></svg>
  </div>
</footer>
</body>
</html>
```
FILE: styles.css
```css
* { box-sizing: border-box; }
html, body { height: 100%; }
body {
  margin: 0;
  display: flex;
  flex-direction: column;
  overflow: hidden;
  background: #0a0a0a;
  color: #fff;
  font: 14px/20px "Open Sans", "Noto Sans", sans-serif;
}
button, input, select { font: inherit; color: inherit; border: 0; background: none; padding: 0; margin: 0; }
a { color: inherit; text-decoration: none; }
svg { display: block; flex: none; }
.sprite { position: absolute; width: 0; height: 0; }
.i10 { width: 10px; height: 10px; }
.i12 { width: 12px; height: 12px; }
.i14 { width: 14px; height: 14px; }
.i16 { width: 16px; height: 16px; }
.i18 { width: 18px; height: 18px; }
.i20 { width: 20px; height: 20px; }
.i22 { width: 22px; height: 22px; }
.i30 { width: 30px; height: 30px; }
.i36 { width: 36px; height: 36px; }
.i40 { width: 40px; height: 40px; }

/* Title bar */
.titlebar { height: 60px; flex: none; display: flex; align-items: center; white-space: nowrap; }
.quick { width: 37%; flex: none; display: flex; align-items: center; padding-left: 19px; }
.autosave { margin-left: 20px; width: 71px; }
.toggle { width: 54px; height: 26px; border: 2px solid #fff; border-radius: 13px; background: #292929; display: flex; align-items: center; gap: 6px; padding-left: 3px; font-size: 13px; }
.knob { width: 18px; height: 18px; border-radius: 50%; background: #fff; }
.tb { display: flex; justify-content: center; width: 20px; }
.save { margin: 0 15px 0 16px; }
.dim { color: #5c5c5c; }
.cv { width: 16px; height: 30px; display: flex; align-items: center; justify-content: center; flex: none; }
.quick .cv { width: 20px; }
.redo { margin-left: 7px; }
.custom { margin-left: 8px; }
.docname { display: flex; align-items: center; gap: 2px; margin-left: 26px; font-size: 15px; }
.search { display: flex; align-items: center; gap: 15px; width: 27%; height: 40px; border-radius: 5px; background: #1f1f1f; padding: 0 26px; }
.search input { flex: 1; min-width: 0; font-size: 16px; }
.search input::placeholder { color: #9a9a9a; opacity: 1; }
.account { display: flex; align-items: center; gap: 14px; margin-left: auto; }
.avatar { width: 30px; height: 30px; border-radius: 50%; background: #038387; font-size: 10px; line-height: 30px; text-align: center; }
.winbtns { display: flex; margin-left: 15px; }
.winbtns button { width: 60px; height: 40px; display: grid; place-items: center; }

/* Ribbon tabs */
.tabs { height: 38px; flex: none; display: flex; align-items: center; gap: 25px; padding: 0 15px 0 27px; font-size: 16px; white-space: nowrap; }
.tabs a { line-height: 24px; border-bottom: 3px solid transparent; padding-top: 5px; }
.tabs .file { margin-right: 6px; }
.tabs .on { font-weight: 600; border-color: #56b880; }
.comments, .share { height: 30px; border-radius: 4px; display: flex; align-items: center; justify-content: center; gap: 4px; font-size: 16px; }
.comments { width: 125px; margin-left: auto; border: 1px solid #777; background: #292929; }
.share { width: 101px; margin-left: -15px; background: #38a55f; color: #0a0a0a; }
.share .i10 { margin-left: 8px; }

/* Ribbon */
.ribbon { margin: 0 10px; height: 124px; flex: none; display: flex; border-radius: 10px; background: #292929; }
.group { display: flex; flex-direction: column; position: relative; }
.group::after { content: ""; position: absolute; right: 0; top: 6px; bottom: 7px; width: 1px; background: #666; }
.body { display: flex; height: 102px; flex: none; }
.cap { font-size: 12px; text-align: center; line-height: 18px; padding: 1px 20px 0 0; position: relative; }
.launch { position: absolute; right: 4px; top: 5px; }
.g-clip { width: 130px; }
.g-font { width: 291px; }
.g-align { width: 363px; }
.g-num { width: 200px; }
.g-styles { width: 242px; }
.g-cells { width: 181px; }
.g-edit { width: 184px; }
.g-sens { width: 91px; }
.g-add { width: 77px; }
.g-styles .cap, .g-cells .cap, .g-edit .cap, .g-sens .cap, .g-add .cap { padding: 2px 0 0; }
.g-clip .body { padding-left: 12px; }
.g-font .body { padding-left: 9px; }
.g-align .body { padding-left: 9px; }
.g-num .body, .g-styles .body, .g-cells .body { padding-left: 10px; }
.g-edit .body { padding-left: 12px; }
.rows { display: flex; flex-direction: column; gap: 10px; padding-top: 14px; }
.row { display: flex; align-items: center; height: 30px; }
.stack { padding-top: 3px; }
.stack div { display: flex; height: 32px; }
.stack .ib { width: 28px; height: 32px; }
.stack .cv { width: 18px; height: 32px; }
.big { display: flex; flex-direction: column; align-items: center; padding-top: 10px; line-height: 20px; white-space: nowrap; }
.big > svg:first-child { margin-bottom: 3px; }
.big.up > svg:first-child { margin-bottom: 1px; }
.big > .i36:first-child { margin: 3px 0 2px; }
.big > .brush:first-child { margin: 3px 0 -2px 4px; }
.big span svg { display: inline-block; }
.big > .i10 { margin-top: 4px; }
.paste { width: 58px; }
.b90 { width: 90px; }
.b76 { width: 76px; }
.b56 { width: 56px; }
.b54 { width: 54px; }
.b58 { width: 58px; }
.fill { width: 100%; }
.off { color: #5f5f5f; }
.ib { width: 32px; height: 30px; display: flex; align-items: center; justify-content: center; flex: none; }
.ib.n { width: 28px; }
.fc { margin-left: 4px; }
.glyph { font-size: 17px; color: #ccc; }
.bold { font-weight: 700; }
.ital { font-family: "Liberation Serif", serif; font-style: italic; font-size: 20px; }
.under { text-decoration: underline; text-underline-offset: 4px; }
.num { font-size: 20px; }
.pct { margin-left: 2px; }
.pressed { border: 1px solid #aaa; border-radius: 5px; background: #3a3a3a; }
.sep { width: 1px; height: 30px; background: #666; margin: 0 4px; flex: none; }
.sep.tight { margin: 0 1px; }
.tall { width: 1px; height: 78px; background: #666; margin: 13px 12px 0 6px; }
.txt { display: flex; align-items: center; gap: 5px; white-space: nowrap; }
.far { margin-left: 14px; }
.drop {
  appearance: none; height: 30px; border: 1px solid #808080; border-radius: 5px; padding: 0 3px; margin-right: 2px;
  background: #292929 url("data:image/svg+xml,%3Csvg xmlns='http://www.w3.org/2000/svg' viewBox='0 0 12 12'%3E%3Cpath d='M2 4l4 4 4-4' fill='none' stroke='%23fff' stroke-width='1.6'/%3E%3C/svg%3E") right 2px center / 10px 10px no-repeat;
}
.w144 { width: 144px; }
.w62 { width: 62px; }
.w180 { width: 180px; }
.dec { flex-direction: column; align-items: flex-end; font-size: 12px; line-height: 12px; color: #ccc; padding: 0 6px; }
.dec span { display: flex; align-items: center; }
.collapse { margin: auto 12px 10px auto; }

/* Formula bar */
.formula { display: flex; align-items: center; flex: none; height: 48px; padding: 2px 10px 0; font-size: 15px; }
.namebox, .fx, .fline { height: 30px; border: 1px solid #666; border-radius: 5px; background: #292929; display: flex; align-items: center; }
.namebox { width: 127px; justify-content: space-between; padding: 0 6px; }
.dots { width: 4px; height: 16px; }
.formula .dots { margin: 0 11px 0 10px; }
.fx { width: 92px; justify-content: space-between; padding: 0 6px 0 7px; font: italic 24px/26px "Liberation Serif", serif; color: #ddd; }
.fline { flex: 1; margin-left: 5px; padding-right: 4px; }
.fline input { flex: 1; min-width: 0; }

/* Worksheet */
.sheet { flex: 1; min-height: 0; display: flex; }
.viewport { flex: 1; min-width: 0; overflow: hidden; background: #fff; }
.grid { width: 100%; table-layout: fixed; border-collapse: separate; border-spacing: 0; color: #000; font: 15px/20px "Noto Sans", "Open Sans", sans-serif; }
.c-n { width: 34px; }
.c-w { width: 276px; }
.c-s { width: 69px; }
.c-e { width: 141px; }
.c-x { width: 456px; }
.grid th { background: #0a0a0a; color: #ccc; font: 16px/20px "Open Sans", sans-serif; padding: 0; border: 0 solid #555; vertical-align: bottom; }
.grid thead th { height: 24px; border-width: 0 1px 1px 0; padding-bottom: 1px; border-bottom-color: #888; }
.grid tbody th { border-width: 0 1px 1px 0; padding: 0 1px 1px 0; }
.grid th.sel { background: #666; color: #fff; }
.grid .corner { background: linear-gradient(135deg, #0a0a0a 60%, #777 60%); }
.grid .last-h { text-align: right; padding-right: 5px; }
.grid tbody tr { height: 24px; }
.grid .r2 { height: 75px; }
.grid td { padding: 0 3px 1px; border: 0 solid #ddd; border-width: 0 1px 1px 0; overflow: hidden; white-space: nowrap; vertical-align: bottom; }
.grid .b { font-weight: 700; font-family: "Open Sans", sans-serif; }
.r { text-align: right; }
.grid .active { position: relative; overflow: visible; }
.active::before { content: ""; position: absolute; inset: -1px -1px -2px -2px; border: 3px solid #217346; }
.active::after { content: ""; position: absolute; right: -3px; bottom: -4px; width: 6px; height: 6px; background: #217346; border: 1px solid #fff; border-width: 1px 0 0 1px; }
.r1 td:nth-child(-n+5) { border-bottom-color: #000; }
.grid .title { font: 700 50px/70px "Open Sans", sans-serif; text-align: center; border-bottom: 3px solid #000; border-right-color: #000; vertical-align: middle; }
.grid .u { border-bottom: 3px solid #000; padding-bottom: 0; }
.plan td:nth-child(2) { border-left: 1px solid #000; padding-left: 2px; }
.plan td:nth-child(3), .plan td:nth-child(5) { border-right: 3px solid #000; padding-right: 1px; }
.head td:nth-child(-n+5), .total td:nth-child(-n+5) { font-weight: 700; font-family: "Open Sans", sans-serif; }
.head td:nth-child(-n+5), .end td:nth-child(-n+5) { border-bottom-color: #000; }
.total td:nth-child(-n+5) { border-bottom: 3px solid #000; padding-bottom: 0; }
.vscroll { width: 26px; flex: none; display: flex; flex-direction: column; align-items: center; justify-content: space-between; padding: 5px 0 2px; }
.vthumb { width: 11px; border-radius: 6px; background: #999; margin: 4px 0 auto; height: 64%; }

/* Sheet tabs */
.sheetbar { height: 40px; flex: none; display: flex; align-items: center; padding-left: 16px; }
.nav { width: 40px; display: grid; place-items: center; }
.sheettab { align-self: flex-start; width: 73px; height: 36px; margin-left: 45px; background: #fff; color: #222; border-radius: 0 0 5px 5px; font-size: 16px; display: flex; justify-content: center; }
.sheettab span { border-bottom: 2px solid #107c41; line-height: 28px; height: 32px; padding-top: 2px; }
.add { margin-left: 5px; border-left: 1px solid #555; height: 24px; width: 118px; display: grid; place-items: center; }
.sheetbar .dots { margin-left: auto; }
.hscroll { width: 722px; height: 22px; margin: 0 23px 0 17px; background: #141414; border-radius: 11px; display: flex; align-items: center; padding: 0 5px; gap: 5px; }
.hthumb { width: 91%; height: 11px; border-radius: 6px; background: #999; margin-right: auto; }

/* Status bar */
.status { height: 27px; flex: none; display: flex; align-items: center; background: #141414; border-top: 1px solid #3a3a3a; font-size: 12px; padding: 0 11px 0 9px; white-space: nowrap; }
.ready { width: 60px; }
.acc { font-weight: 700; margin-left: 5px; }
.views { margin-left: auto; display: flex; align-self: stretch; }
.views button { width: 50px; display: grid; place-items: center; }
.views .on { background: #262626; }
.z { margin: 0 6px; }
.zoom { appearance: none; width: 125px; height: 14px; background: linear-gradient(#aaa, #aaa) center / 100% 1px no-repeat; }
.zoom::-webkit-slider-thumb { appearance: none; width: 6px; height: 14px; background: #aaa; }
.pct100 { width: 42px; text-align: right; }

/* Taskbar */
.taskbar { height: 60px; flex: none; display: flex; align-items: center; border-top: 1px solid #484848; padding: 0 2px 2px 0; background: radial-gradient(circle at 38% 50%, #33221a 0, transparent 160px), radial-gradient(circle at 63% 50%, #1f2333 0, transparent 150px), #202020; }
.weather, .tray { flex: 1; display: flex; align-items: center; }
.weather { padding-left: 28px; gap: 13px; }
.sun { width: 24px; height: 24px; border-radius: 50%; background: linear-gradient(135deg, #f7c331, #f2650f); }
.mute { color: #aaa; }
.apps { display: flex; align-items: center; }
.apps button { width: 55px; height: 50px; display: grid; place-items: center; position: relative; }
.apps .run::after { content: ""; position: absolute; left: 24px; bottom: 1px; width: 8px; height: 4px; border-radius: 2px; background: #999; }
.apps .cur::before { content: ""; position: absolute; inset: 0 2px; border-radius: 5px; background: #fff; opacity: .08; }
.apps .cur::after { left: 18px; width: 20px; background: #d88ade; }
.tsearch { width: 275px; height: 40px; margin: 0 3px; border-radius: 20px; border: 1px solid #5a5654; background: #45403d; display: flex; align-items: center; gap: 12px; padding: 0 8px 0 14px; }
.tsearch input { flex: 1; min-width: 0; font-size: 15px; }
.tsearch input::placeholder { color: #ccc; opacity: 1; }
.art { width: 58px; height: 32px; }
.tray { justify-content: flex-end; gap: 10px; padding-right: 24px; }
.cloud { margin: 0 10px 0 13px; }
.clock { text-align: right; margin-left: 11px; }
```
